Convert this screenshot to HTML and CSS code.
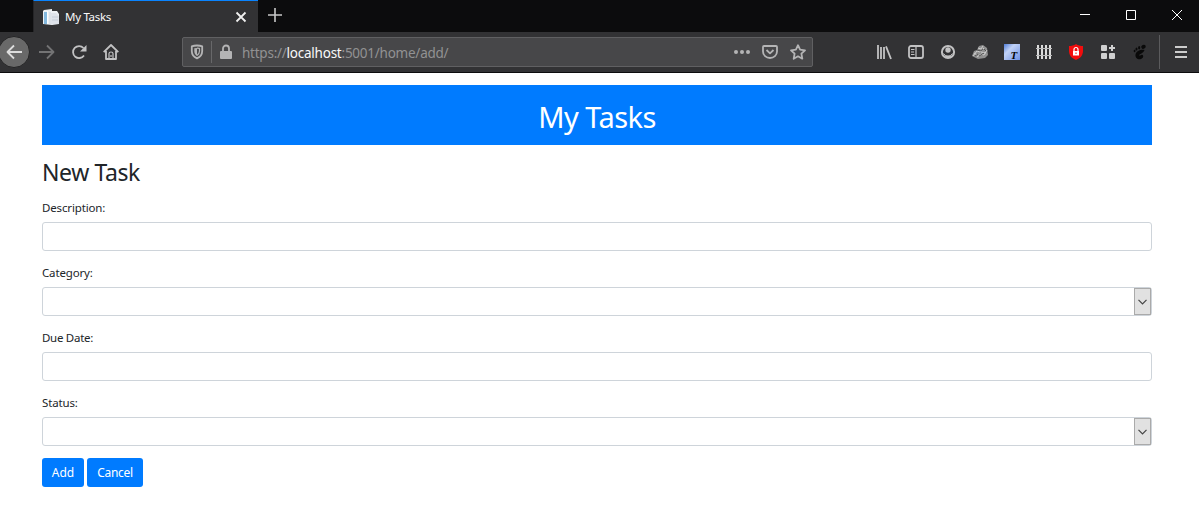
FILE: index.html
```
<!DOCTYPE html>
<html lang="en">
<head>
<meta charset="utf-8">
<title>My Tasks</title>
<link rel="stylesheet" href="styles.css">
</head>
<body>
<header class="browser">
  <div class="titlebar">
    <div class="tab">
      <svg class="favicon" width="16" height="16" viewBox="0 0 16 16"><path d="M1 1l8-1v2h5l2 3v10l-7 1-9-1V2z" fill="#eef1f4"/><path d="M1 3h3v12H1z" fill="#84b9df"/><path d="M4 2h1v13H4z" fill="#fff"/><path d="M8 4h5l3 3v8H8z" fill="#dfe3ea"/><path d="M7 3v12M9 8h6M9 11h6" stroke="#b6c1cf" stroke-width=".6"/></svg>
      <span class="tab-title">My Tasks</span>
      <svg class="tab-close" width="12" height="12" viewBox="0 0 12 12"><path d="M1.500 1.500l9 9m0-9l-9 9" stroke="#f0f0f0" stroke-width="1.800"/></svg>
    </div>
    <svg class="new-tab" width="14" height="14" viewBox="0 0 14 14"><path d="M7 0v14M0 7h14" stroke="#c8c8c8" stroke-width="1.600"/></svg>
    <div class="window-controls">
      <svg width="46" height="30" viewBox="0 0 46 30"><path d="M18 14.500h10" stroke="#fff"/></svg>
      <svg width="46" height="30" viewBox="0 0 46 30"><path d="M18.500 10.500h9v9h-9z" stroke="#fff" fill="none"/></svg>
      <svg width="46" height="30" viewBox="0 0 46 30"><path d="M18 10l10 10m0-10L18 20" stroke="#fff"/></svg>
    </div>
  </div>
  <nav class="toolbar">
    <span class="tool back"><svg width="16" height="16" viewBox="0 0 16 16"><path d="M16 8H1.500M8 1.500L1.500 8 8 14.500" class="line"/></svg></span>
    <span class="tool"><svg width="16" height="16" viewBox="0 0 16 16"><path d="M0 8h14.500M8 1.500L14.500 8 8 14.500" class="line dim"/></svg></span>
    <span class="tool"><svg width="16" height="16" viewBox="0 0 16 16"><path d="M13 11.500A6 6 0 1 1 12.500 4" class="line"/><path d="M15.500 1v6.500H9z" fill="#c2c2c3"/></svg></span>
    <span class="tool"><svg width="16" height="16" viewBox="0 0 16 16"><path d="M.7 8.200L8 1l7.300 7.200M3 7v8h10V7" class="line"/><path d="M6 15V9.500q0-1.500 2-1.500t2 1.500V15" class="line thin"/><path d="M8 11v2" class="line thin"/></svg></span>
    <div class="address">
      <svg width="14" height="16" viewBox="0 0 14 16"><path d="M7 1.500c2 0 4 .3 5.200.8V7c0 3.500-2 6-5.200 7.300C3.800 13 1.800 10.500 1.800 7V2.300C3 1.800 5 1.500 7 1.500z" class="line soft"/><path d="M7 4v8C5 10.600 4.300 9 4.300 7V4.300z" fill="#b4b4b5"/><path d="M7 4.200c1.500 0 2 .2 2.500.3V7c0 2-.8 3.300-2.500 4.500" class="line thin soft"/></svg>
      <span class="address-divider"></span>
      <svg width="12" height="16" viewBox="0 0 12 16"><path d="M3 7V4.500a3 3 0 0 1 6 0V7" class="line soft"/><rect y="7" width="12" height="8" rx="1" fill="#b4b4b5"/></svg>
      <span class="url">https://<b>localhost</b>:5001/home/add/</span>
      <svg class="more" width="18" height="16" viewBox="0 0 18 16" fill="#b4b4b5"><circle cx="3" cy="8" r="2"/><circle cx="9" cy="8" r="2"/><circle cx="15" cy="8" r="2"/></svg>
      <svg class="pocket" width="16" height="16" viewBox="0 0 16 16"><path d="M2 2h12q1 0 1 1v4.500a7 6.500 0 0 1-14 0V3q0-1 1-1z" class="line soft"/><path d="M4.500 6L8 9.300 11.500 6" class="line soft"/></svg>
      <svg class="star" width="16" height="16" viewBox="0 0 16 16"><path d="M8 1.200l2.100 4.500 4.900.6-3.600 3.400.9 5L8 12.300l-4.300 2.400.9-5L1 6.300l4.900-.6z" class="line soft"/></svg>
    </div>
    <div class="extensions">
      <span class="tool"><svg width="16" height="16" viewBox="0 0 16 16"><path d="M2 1v14M5 3v12M8 3v12M10 2.300L15 15" stroke="#c2c2c3" stroke-width="1.800" fill="none"/></svg></span>
      <span class="tool"><svg width="16" height="16" viewBox="0 0 16 16"><rect x="1" y="2" width="14" height="12" rx="2" class="line"/><path d="M8 2v12M3 5.500h3.500M3 8h3M3 10.500h3.500" class="line thin"/></svg></span>
      <span class="tool"><svg width="16" height="16" viewBox="0 0 16 16"><circle cx="8" cy="8" r="6.100" fill="none" stroke="#c2c2c3" stroke-width="2"/><circle cx="8" cy="6" r="2.700" fill="#c2c2c3"/><path d="M3.500 9.500Q5.500 12.500 8 12.500t4.500-3" fill="none" stroke="#c2c2c3" stroke-width="1"/><path d="M4.500 11.500Q6 14 8 14t3.500-2.500z" fill="#c2c2c3"/></svg></span>
      <span class="tool"><svg width="16" height="16" viewBox="0 0 16 16"><path d="M0 12l2-5 3-1 2-4 4-1 4 3 1 7-3 3-7 1-4-2z" fill="#909090"/><path d="M1 12l4-5 3 1 4-4M6 4l3 1 2-3M5 13l4-3 3 1 3-5M9 8l5 1M2 9l3 2" stroke="#ccc" fill="none"/><path d="M5 6l4 1 2-2M7 12l5-3M3 12l3-2M12 5l2 2" stroke="#444" stroke-width=".8" fill="none"/></svg></span>
      <span class="tool"><svg width="16" height="16" viewBox="0 0 16 16"><defs><linearGradient id="sky" x2="1" y2="1"><stop stop-color="#507dd8"/><stop offset=".35" stop-color="#c1d2f7"/><stop offset="1" stop-color="#6c90e4"/></linearGradient></defs><path d="M0 0h16v16H0z" fill="url(#sky)"/><text x="6.500" y="14.500" class="letter">T</text></svg></span>
      <span class="tool"><svg width="16" height="16" viewBox="0 0 16 16"><path d="M2 1v14M6 1v14M10 1v14M14 1v14" stroke="#ddd" stroke-width="2"/><path d="M0 4.500h16M0 11.500h16" stroke="#bbb" stroke-width="1.200"/></svg></span>
      <span class="tool"><svg width="16" height="16" viewBox="0 0 16 16"><path d="M8 0c2 1.500 4.500 2 7 2v5c0 4.500-3 7.500-7 9-4-1.500-7-4.500-7-9V2c2.500 0 5-.5 7-2z" fill="#f20d0d"/><path d="M6 7V5.500a2 2 0 0 1 4 0V7" stroke="#fff" stroke-width="1.200" fill="none"/><path d="M5 7h6v4.500H5z" fill="#fff"/><path d="M8 8.500v1.500" stroke="#f20d0d"/></svg></span>
      <span class="tool"><svg width="16" height="16" viewBox="0 0 16 16" fill="#d0d0d0"><rect x="1" y="1" width="6" height="6" rx="1"/><rect x="1" y="9" width="6" height="6" rx="1"/><rect x="9" y="9" width="6" height="6" rx="1"/><path d="M11 1h2v2h2v2h-2v2h-2V5H9V3h2z"/></svg></span>
      <span class="tool"><svg width="16" height="16" viewBox="0 0 16 16" fill="#090909"><ellipse cx="11.500" cy="2.800" rx="2.300" ry="2" transform="rotate(-25 11.500 2.800)"/><ellipse cx="7.200" cy="3.700" rx="1.100" ry="1.700"/><ellipse cx="4.500" cy="5" rx="1" ry="1.500"/><ellipse cx="2.600" cy="7" rx=".9" ry="1.300"/><path d="M12.500 6C9 5 4 7 3.500 10.500 3 14 6 16 9 15c2.500-.8 3-3.500 1-4.200-1.200-.4-1.500 1.200-2.700.6C6 10.500 11.500 9.500 12.500 6z"/></svg></span>
    </div>
    <span class="toolbar-divider"></span>
    <svg class="menu" width="12" height="14" viewBox="0 0 12 14"><path d="M0 2h12M0 7h12M0 12h12" stroke="#ccc" stroke-width="1.900"/></svg>
  </nav>
</header>
<main class="page">
  <h1 class="banner"><span>My Tasks</span></h1>
  <h2 class="heading">New Task</h2>
  <form>
    <div class="group"><label class="label description" for="description">Description:</label><input class="control" id="description" type="text"></div>
    <div class="group"><label class="label" for="category">Category:</label><div class="control select" id="category"><span class="arrow"><svg width="9" height="6" viewBox="0 0 9 6"><path d="M.5.8l4 4 4-4" stroke="#444" fill="none" stroke-width="1.200"/></svg></span></div></div>
    <div class="group"><label class="label due" for="due">Due Date:</label><input class="control" id="due" type="text"></div>
    <div class="group"><label class="label" for="status">Status:</label><div class="control select" id="status"><span class="arrow"><svg width="9" height="6" viewBox="0 0 9 6"><path d="M.5.8l4 4 4-4" stroke="#444" fill="none" stroke-width="1.200"/></svg></span></div></div>
    <div class="actions"><button type="button" class="button add">Add</button><button type="button" class="button cancel">Cancel</button></div>
  </form>
</main>
</body>
</html>
```
FILE: styles.css
```
* { box-sizing: border-box; }
body { margin: 0; background: #fff; color: #212529; font-family: "Noto Sans", "Open Sans", sans-serif; font-size: 12px; overflow: hidden; }
svg { display: block; flex: none; }
.browser { height: 73px; background: #0c0c0d; }
.titlebar { height: 32px; display: flex; align-items: flex-start; padding-left: 33px; }
.tab { width: 225px; height: 32px; display: flex; align-items: center; padding: 0 11px 0 9px; background: #323234; border-top: 1px solid #0a84ff; border-left: 1px solid #252527; color: #f9f9fa; }
.tab-title { margin-left: 6px; font-size: 11.5px; letter-spacing: -.3px; }
.tab-close { margin-left: auto; }
.new-tab { margin: 8px 0 0 10px; }
.window-controls { display: flex; margin-left: auto; margin-right: -1px; }
.toolbar { height: 40px; display: flex; align-items: center; background: #323234; }
.tool { width: 32px; height: 32px; flex: none; display: flex; align-items: center; justify-content: center; }
.back { margin: 0 1px 0 -2px; border-radius: 50%; background: #696969; border: 1px solid #242425; }
.line { fill: none; stroke: #c2c2c3; stroke-width: 1.8; stroke-linejoin: round; }
.back .line { stroke: #ddd; }
.dim { stroke: #737374; }
.soft { stroke: #b4b4b5; }
.thin { stroke-width: 1.2; }
.address { width: 631px; height: 30px; margin-left: 55px; padding: 0 6px 0 7px; display: flex; align-items: center; background: #474749; border: 1px solid #606062; border-radius: 2px; }
.address-divider { width: 1px; height: 22px; margin: 0 8px 0 7px; background: #68686a; }
.url { margin-left: 10px; padding-top: 1px; font-size: 13.5px; letter-spacing: -.24px; color: #929293; }
.url b { font-weight: 400; color: #f9f9fa; }
.more { margin-left: auto; }
.pocket { margin-left: 11px; }
.star { margin-left: 12px; }
.extensions { display: flex; margin-left: 55px; }
.letter { font: italic bold 11px "Liberation Serif", serif; fill: #050505; }
.toolbar-divider { width: 1px; height: 34px; margin-left: 3px; background: #5b5b5d; }
.menu { margin-left: 15px; }
.page { margin: 12px 47px 0 42px; }
.banner { height: 60px; margin: 0 0 12px; padding-top: 2px; display: flex; justify-content: center; align-items: center; background: #007bff; color: #fff; font-size: 29px; font-weight: 400; letter-spacing: -.55px; }
.heading { height: 29px; line-height: 31px; margin: 0 0 12px; font-size: 23px; font-weight: 400; letter-spacing: -.4px; }
.group { margin-bottom: 12px; }
.label { display: block; height: 18px; line-height: 20px; margin-bottom: 6px; font-size: 11.5px; letter-spacing: -.15px; }
.due { letter-spacing: -.28px; }
.control { display: block; width: 100%; height: 29px; padding: 0; border: 1px solid #ced4da; border-radius: 3px; background: #fff; }
.select { display: flex; justify-content: flex-end; }
.arrow { width: 17px; display: flex; align-items: center; justify-content: center; background: #e1e1e1; border: 1px solid #aaa; }
.actions { display: flex; gap: 3px; }
.button { height: 29px; padding: 0; border: 0; border-radius: 3px; background: #007bff; color: #fff; font: 12px "Noto Sans", "Open Sans", sans-serif; }
.add { width: 42px; }
.cancel { width: 56px; letter-spacing: -.3px; }
```
